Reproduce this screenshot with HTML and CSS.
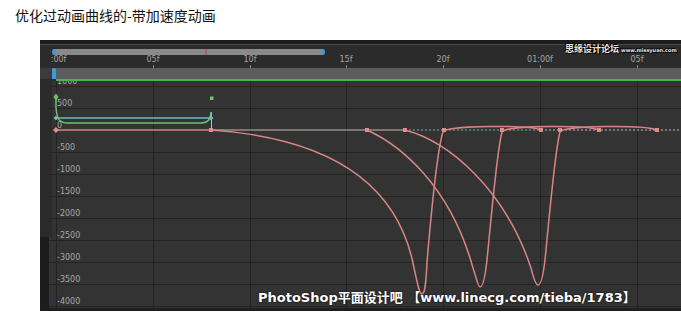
FILE: index.html
```html
<!DOCTYPE html>
<html lang="zh-CN">
<head>
  <meta charset="UTF-8" />
  <title>优化过动画曲线的-带加速度动画</title>
  <link rel="stylesheet" href="styles.css">
</head>
<body>
  <h1 class="title">优化过动画曲线的-带加速度动画</h1>

  <div class="panel">
    <div class="panel-top"></div>

    <svg class="ruler" width="641" height="23" viewBox="40 45 641 23">
      <defs>
        <clipPath id="rulerClip"><rect x="51" y="45" width="630" height="23" /></clipPath>
      </defs>
      <rect x="40" y="45" width="641" height="23" fill="#2b2b2b" />
      <!-- work area bar -->
      <rect x="54" y="49" width="269" height="6" fill="#8a8a8a" />
      <rect x="205" y="49" width="2" height="6" fill="#a86464" />
      <path d="M56 49 H54 A2 3 0 0 0 54 55 H56 Z" fill="#3c9bd8" />
      <path d="M321 49 H323 A2 3 0 0 1 323 55 H321 Z" fill="#3c9bd8" />
      <g clip-path="url(#rulerClip)" class="ruler-labels">
        <text x="56" y="62">0:00f</text>
        <text x="153" y="62">05f</text>
        <text x="250" y="62">10f</text>
        <text x="346" y="62">15f</text>
        <text x="443" y="62">20f</text>
        <text x="540" y="62">01:00f</text>
        <text x="637" y="62">05f</text>
      </g>
      <g stroke="#8a8a8a" stroke-width="1">
        <line x1="153.5" y1="65" x2="153.5" y2="68" />
        <line x1="250.5" y1="65" x2="250.5" y2="68" />
        <line x1="346.5" y1="65" x2="346.5" y2="68" />
        <line x1="443.5" y1="65" x2="443.5" y2="68" />
        <line x1="540.5" y1="65" x2="540.5" y2="68" />
        <line x1="637.5" y1="65" x2="637.5" y2="68" />
      </g>
    </svg>

    <div class="layer-band">
      <div class="band-gutter"></div>
      <div class="band-handle"></div>
      <div class="band-fill"></div>
    </div>

    <svg class="graph" width="641" height="227" viewBox="40 81 641 227">
      <rect x="40" y="81" width="641" height="227" fill="#333333" />
      <rect x="40" y="81" width="12" height="156" fill="#2b2b2b" />
      <rect x="40" y="237" width="9" height="71" fill="#1c1c1c" />

      <g stroke="#242424" stroke-width="1">
        <line x1="56.5" y1="81" x2="56.5" y2="308" />
        <line x1="153.5" y1="81" x2="153.5" y2="308" />
        <line x1="250.5" y1="81" x2="250.5" y2="308" />
        <line x1="346.5" y1="81" x2="346.5" y2="308" />
        <line x1="443.5" y1="81" x2="443.5" y2="308" />
        <line x1="540.5" y1="81" x2="540.5" y2="308" />
        <line x1="637.5" y1="81" x2="637.5" y2="308" />
        <line x1="49" y1="86.5" x2="681" y2="86.5" />
        <line x1="49" y1="108.5" x2="681" y2="108.5" />
        <line x1="49" y1="152.5" x2="681" y2="152.5" />
        <line x1="49" y1="174.5" x2="681" y2="174.5" />
        <line x1="49" y1="196.5" x2="681" y2="196.5" />
        <line x1="49" y1="218.5" x2="681" y2="218.5" />
        <line x1="49" y1="240.5" x2="681" y2="240.5" />
        <line x1="49" y1="262.5" x2="681" y2="262.5" />
        <line x1="49" y1="284.5" x2="681" y2="284.5" />
        <line x1="49" y1="306.5" x2="681" y2="306.5" />
      </g>

      <g class="value-labels">
        <text x="57" y="84">1000</text>
        <text x="57" y="106">500</text>
        <text x="57" y="128">0</text>
        <text x="57" y="150">-500</text>
        <text x="57" y="172">-1000</text>
        <text x="57" y="194">-1500</text>
        <text x="57" y="216">-2000</text>
        <text x="57" y="238">-2500</text>
        <text x="57" y="260">-3000</text>
        <text x="57" y="282">-3500</text>
        <text x="57" y="304">-4000</text>
      </g>

      <!-- baseline -->
      <line x1="211" y1="130" x2="405" y2="130" stroke="#cbb7b7" stroke-width="1.2" />
      <line x1="405" y1="130" x2="541" y2="130" stroke="#66b3ad" stroke-width="1.2" stroke-dasharray="2 2" />
      <line x1="541" y1="130" x2="681" y2="130" stroke="#c9b7b7" stroke-width="1.2" stroke-dasharray="2 2" />
      <line x1="56" y1="130" x2="211" y2="130" stroke="#dc7f7f" stroke-width="1.6" />

      <!-- first key segment -->
      <line x1="56" y1="118" x2="211" y2="118" stroke="#72b6cc" stroke-width="1.6" />
      <line x1="211.5" y1="112" x2="211.5" y2="130" stroke="#b9c4b9" stroke-width="1" />
      <path d="M56 97 V108 C57 119 59 123 68 123 H201 C208 123 211 119 211 112" fill="none" stroke="#6cc46a" stroke-width="1.5" />
      <path d="M56 93.5 L58.5 97 L56 100.5 L53.5 97 Z" fill="#6cc46a" />
      <rect x="210" y="96.5" width="3.5" height="3.5" fill="#6cc46a" />
      <path d="M56 115.5 L58.5 118 L56 120.5 L53.5 118 Z" fill="#72b6cc" />
      <path d="M211 115.5 L213.5 118 L211 120.5 L208.5 118 Z" fill="#72b6cc" />

      <!-- speed curves -->
      <g fill="none" stroke="#d98585" stroke-width="1.5">
        <path d="M211 130 C300 136 395 165 414 268 C418 285 419 294 422 294 C425 294 426 283 427 262 C431 215 437 150 443 132 C446 125 530 125 541 130" />
        <path d="M367 130 C400 145 450 185 473 268 C477 280 478 287 480 287 C483 287 485 278 487 260 C491 220 497 150 502 132 C505 125 588 125 599 130" />
        <path d="M405 130 C450 142 505 190 531 268 C534 280 536 285 538 285 C541 285 543 277 545 260 C549 220 555 150 560 132 C563 125 646 125 657 130" />
      </g>

      <g fill="#e08c8a">
        <path d="M56 127 L59 130 L56 133 L53 130 Z" />
        <rect x="209" y="128" width="4" height="4" />
        <rect x="365" y="128" width="4" height="4" />
        <rect x="403" y="128" width="4" height="4" />
        <rect x="442" y="128" width="4" height="4" />
        <rect x="500" y="128" width="4" height="4" />
        <rect x="539" y="128" width="4" height="4" />
        <rect x="558" y="128" width="4" height="4" />
        <rect x="597" y="128" width="4" height="4" />
        <rect x="655" y="128" width="4" height="4" />
      </g>
    </svg>

    <div class="panel-bottom"></div>

    <div class="mark-top">思缘设计论坛 <span>www.missyuan.com</span></div>
    <div class="mark-bottom">PhotoShop平面设计吧 【www.linecg.com/tieba/1783】</div>
  </div>
</body>
</html>
```

FILE: styles.css
```css
* {
  box-sizing: border-box;
}

body {
  margin: 0;
  background: #ffffff;
  font-family: "Liberation Sans", "Noto Sans CJK SC", sans-serif;
}

.title {
  margin: 0;
  height: 40px;
  padding: 6px 0 0 15px;
  font-family: "Noto Sans CJK SC", sans-serif;
  font-size: 14px;
  font-weight: normal;
  line-height: 18px;
  color: #111111;
}

.panel {
  position: relative;
  margin-left: 40px;
  width: 641px;
  height: 271px;
  display: flex;
  flex-direction: column;
  background: #2b2b2b;
  overflow: hidden;
}

.panel-top {
  height: 5px;
  background: #1c1c1c;
  border-bottom: 1px solid #3e4c57;
}

.ruler,
.graph {
  display: block;
}

.ruler-labels text {
  font-family: "DejaVu Sans", sans-serif;
  font-size: 8px;
  fill: #a4a4a4;
  text-anchor: middle;
}

.value-labels text {
  font-family: "DejaVu Sans", sans-serif;
  font-size: 8px;
  fill: #a6a6a6;
}

.layer-band {
  height: 13px;
  display: flex;
}

.band-gutter {
  width: 12px;
  background: #3b3b3b;
  border-bottom: 2px solid #2b2b2b;
}

.band-handle {
  width: 4px;
  background: #3c9bd8;
  border-radius: 1px;
  border-bottom: 2px solid #2b2b2b;
}

.band-fill {
  flex: 1;
  background: #5c5c5c;
  border-bottom: 2px solid #45b845;
}

.panel-bottom {
  flex: 1;
  background: #1e1e1e;
}

.mark-top {
  position: absolute;
  top: 3px;
  left: 525px;
  font-family: "Noto Sans CJK SC", sans-serif;
  font-size: 9px;
  font-weight: bold;
  line-height: 11px;
  color: #e8e8e8;
  white-space: nowrap;
  text-shadow: 0 0 1px #000, 1px 1px 0 #000, -1px -1px 0 #000;
}

.mark-top span {
  font-family: "DejaVu Sans", sans-serif;
  font-size: 5px;
}

.mark-bottom {
  position: absolute;
  top: 249px;
  left: 218px;
  font-family: "DejaVu Sans", "Noto Sans CJK SC", sans-serif;
  font-size: 13px;
  font-weight: bold;
  line-height: 18px;
  color: #ffffff;
  white-space: nowrap;
  text-shadow: 0 0 2px #000;
}
```
